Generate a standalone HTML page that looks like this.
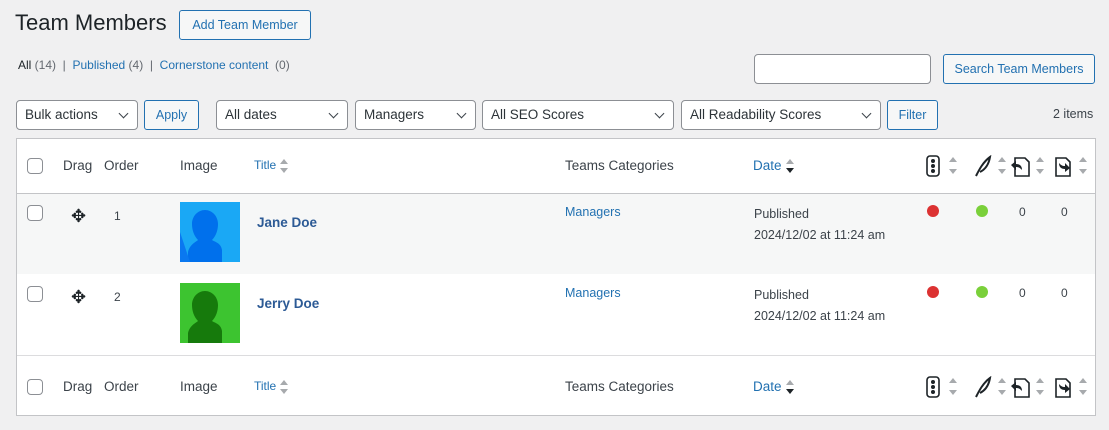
<!DOCTYPE html><html><head><meta charset="utf-8"><style>
body{margin:0;width:1109px;height:430px;background:#f0f0f1;font-family:"Liberation Sans",sans-serif;font-size:12.5px;color:#3c434a;position:relative;overflow:hidden}
.a{position:absolute;white-space:nowrap}
.btn{position:absolute;border:1px solid #2271b1;color:#2271b1;background:#f6f7f7;border-radius:3px;box-sizing:border-box;text-align:center;font-size:12.5px}
.sel{position:absolute;border:1px solid #8c8f94;background:#fff;border-radius:4px;box-sizing:border-box;height:30px;top:100px;line-height:28px;padding-left:8px;font-size:13.5px;color:#2c3338}
.sel:after{content:"";position:absolute;right:10px;top:9px;width:6px;height:6px;border-right:1.6px solid #3c434a;border-bottom:1.6px solid #3c434a;transform:rotate(45deg)}
.cb{position:absolute;width:14px;height:14px;border:1px solid #8c8f94;border-radius:4px;background:#fff}
.lnk{color:#2271b1}
.sort{display:inline-block;vertical-align:middle;margin-left:4px;width:8px;height:14px;position:relative}
.sort:before{content:"";position:absolute;top:0;left:0;border:4px solid transparent;border-bottom:5px solid #a7aaad;border-top:0}
.sort:after{content:"";position:absolute;bottom:0;left:0;border:4px solid transparent;border-top:5px solid #a7aaad;border-bottom:0}
.dsort:after{border-top-color:#1d2327}
.dot{position:absolute;width:12px;height:12px;border-radius:50%}
.h{font-size:13.5px}
</style></head><body>
<div class="a" style="left:15px;top:10px;font-size:22px;color:#1d2327">Team Members</div>
<div class="btn" style="left:179px;top:10px;width:132px;height:30px;line-height:28px">Add Team Member</div>
<div class="a" style="left:18px;top:58px;color:#646970;font-size:12px"><span style="color:#1d2327">All</span> (14) &nbsp;| &nbsp;<span class="lnk">Published</span> (4) &nbsp;| &nbsp;<span class="lnk">Cornerstone content</span> &nbsp;(0)</div>
<div class="a" style="left:754px;top:54px;width:177px;height:30px;border:1px solid #8c8f94;border-radius:4px;background:#fff;box-sizing:border-box"></div>
<div class="btn" style="left:943px;top:54px;width:152px;height:30px;line-height:28px">Search Team Members</div>
<div class="sel" style="left:16px;width:122px">Bulk actions</div>
<div class="btn" style="left:144px;top:100px;width:55px;height:30px;line-height:28px">Apply</div>
<div class="sel" style="left:216px;width:132px">All dates</div>
<div class="sel" style="left:355px;width:121px">Managers</div>
<div class="sel" style="left:482px;width:192px">All SEO Scores</div>
<div class="sel" style="left:681px;width:200px">All Readability Scores</div>
<div class="btn" style="left:887px;top:100px;width:51px;height:30px;line-height:28px">Filter</div>
<div class="a" style="left:1053px;top:107px">2 items</div>
<div class="a" style="left:16px;top:138px;width:1078px;height:276px;border:1px solid #c3c4c7;background:#fff"></div>
<div class="a" style="left:17px;top:193px;width:1078px;height:1px;background:#c3c4c7"></div>
<div class="a" style="left:17px;top:194px;width:1078px;height:80px;background:#f6f7f7"></div>
<div class="a" style="left:17px;top:355px;width:1078px;height:1px;background:#dcdcde"></div>
<div class="cb" style="left:27px;top:158px"></div>
<div class="a h" style="left:63px;top:158px">Drag</div>
<div class="a h" style="left:104px;top:158px">Order</div>
<div class="a h" style="left:180px;top:158px">Image</div>
<div class="a lnk" style="left:254px;top:158px;font-size:12px">Title<span class="sort"></span></div>
<div class="a h" style="left:565px;top:158px">Teams Categories</div>
<div class="a lnk h" style="left:753px;top:158px">Date<span class="sort dsort"></span></div>
<div class="cb" style="left:27px;top:379px"></div>
<div class="a h" style="left:63px;top:379px">Drag</div>
<div class="a h" style="left:104px;top:379px">Order</div>
<div class="a h" style="left:180px;top:379px">Image</div>
<div class="a lnk" style="left:254px;top:379px;font-size:12px">Title<span class="sort"></span></div>
<div class="a h" style="left:565px;top:379px">Teams Categories</div>
<div class="a lnk h" style="left:753px;top:379px">Date<span class="sort dsort"></span></div>
<svg class="a" style="left:920px;top:155px" width="180" height="24" viewBox="0 0 180 24">
<rect x="7" y="1" width="12" height="20" rx="3" fill="none" stroke="#1d2327" stroke-width="1.6"/><circle cx="13" cy="6" r="2" fill="#1d2327"/><circle cx="13" cy="11" r="2" fill="#1d2327"/><circle cx="13" cy="16" r="2" fill="#1d2327"/>
<path d="M29 7l4-5 4 5zM29 14l4 5 4-5z" fill="#a7aaad"/>
<path d="M56 21c3-6 7-14 14-19-1 6-4 12-10 15" fill="none" stroke="#1d2327" stroke-width="2"/>
<path d="M78 7l4-5 4 5zM78 14l4 5 4-5z" fill="#a7aaad"/>
<path d="M95 3h10l4 4v14h-14z" fill="none" stroke="#1d2327" stroke-width="1.6"/><path d="M91 10l5-4v3c4 0 6 2 6 6-2-2-3-3-6-3v3z" fill="#1d2327"/>
<path d="M116 7l4-5 4 5zM116 14l4 5 4-5z" fill="#a7aaad"/>
<path d="M136 3h10l4 4v14h-14z" fill="none" stroke="#1d2327" stroke-width="1.6"/><path d="M150 13l-5 4v-3c-4 0-6-2-6-6 2 2 3 3 6 3v-3z" fill="#1d2327"/>
<path d="M159 7l4-5 4 5zM159 14l4 5 4-5z" fill="#a7aaad"/>
</svg>
<svg class="a" style="left:920px;top:376px" width="180" height="24" viewBox="0 0 180 24">
<rect x="7" y="1" width="12" height="20" rx="3" fill="none" stroke="#1d2327" stroke-width="1.6"/><circle cx="13" cy="6" r="2" fill="#1d2327"/><circle cx="13" cy="11" r="2" fill="#1d2327"/><circle cx="13" cy="16" r="2" fill="#1d2327"/>
<path d="M29 7l4-5 4 5zM29 14l4 5 4-5z" fill="#a7aaad"/>
<path d="M56 21c3-6 7-14 14-19-1 6-4 12-10 15" fill="none" stroke="#1d2327" stroke-width="2"/>
<path d="M78 7l4-5 4 5zM78 14l4 5 4-5z" fill="#a7aaad"/>
<path d="M95 3h10l4 4v14h-14z" fill="none" stroke="#1d2327" stroke-width="1.6"/><path d="M91 10l5-4v3c4 0 6 2 6 6-2-2-3-3-6-3v3z" fill="#1d2327"/>
<path d="M116 7l4-5 4 5zM116 14l4 5 4-5z" fill="#a7aaad"/>
<path d="M136 3h10l4 4v14h-14z" fill="none" stroke="#1d2327" stroke-width="1.6"/><path d="M150 13l-5 4v-3c-4 0-6-2-6-6 2 2 3 3 6 3v-3z" fill="#1d2327"/>
<path d="M159 7l4-5 4 5zM159 14l4 5 4-5z" fill="#a7aaad"/>
</svg>
<div class="cb" style="left:27px;top:205px"></div>
<div class="a" style="left:71px;top:207px;font-size:18px;line-height:18px;color:#1d2327">✥</div>
<div class="a" style="left:114px;top:209px;font-size:12px">1</div>
<svg class="a" style="left:180px;top:202px" width="60" height="60"><rect width="60" height="60" fill="#1aa8f5"/><path d="M8 60V50c2-8 8-10 10-12-4-4-6-10-6-16 0-8 6-14 13-14s13 6 13 14c0 6-2 12-6 16 3 2 9 3 10 10v12z" fill="#0070ec"/><path d="M0 30l0 30 10 0z" fill="#0a78f0"/></svg>
<div class="a" style="left:257px;top:215px;font-size:13.5px;font-weight:bold;color:#2c5a95">Jane Doe</div>
<div class="a lnk" style="left:565px;top:205px">Managers</div>
<div class="a" style="left:754px;top:204px;line-height:21px">Published<br>2024/12/02 at 11:24 am</div>
<div class="dot" style="left:927px;top:205px;background:#dc3232"></div>
<div class="dot" style="left:976px;top:205px;background:#7ad03a"></div>
<div class="a" style="left:1019px;top:205px;font-size:12px">0</div>
<div class="a" style="left:1061px;top:205px;font-size:12px">0</div>
<div class="cb" style="left:27px;top:286px"></div>
<div class="a" style="left:71px;top:288px;font-size:18px;line-height:18px;color:#1d2327">✥</div>
<div class="a" style="left:114px;top:290px;font-size:12px">2</div>
<svg class="a" style="left:180px;top:283px" width="60" height="60"><rect width="60" height="60" fill="#3dc430"/><path d="M8 60V50c2-8 8-10 10-12-4-4-6-10-6-16 0-8 6-14 13-14s13 6 13 14c0 6-2 12-6 16 3 2 9 3 10 10v12z" fill="#167a0c"/></svg>
<div class="a" style="left:257px;top:296px;font-size:13.5px;font-weight:bold;color:#2c5a95">Jerry Doe</div>
<div class="a lnk" style="left:565px;top:286px">Managers</div>
<div class="a" style="left:754px;top:285px;line-height:21px">Published<br>2024/12/02 at 11:24 am</div>
<div class="dot" style="left:927px;top:286px;background:#dc3232"></div>
<div class="dot" style="left:976px;top:286px;background:#7ad03a"></div>
<div class="a" style="left:1019px;top:286px;font-size:12px">0</div>
<div class="a" style="left:1061px;top:286px;font-size:12px">0</div>
</body></html>
